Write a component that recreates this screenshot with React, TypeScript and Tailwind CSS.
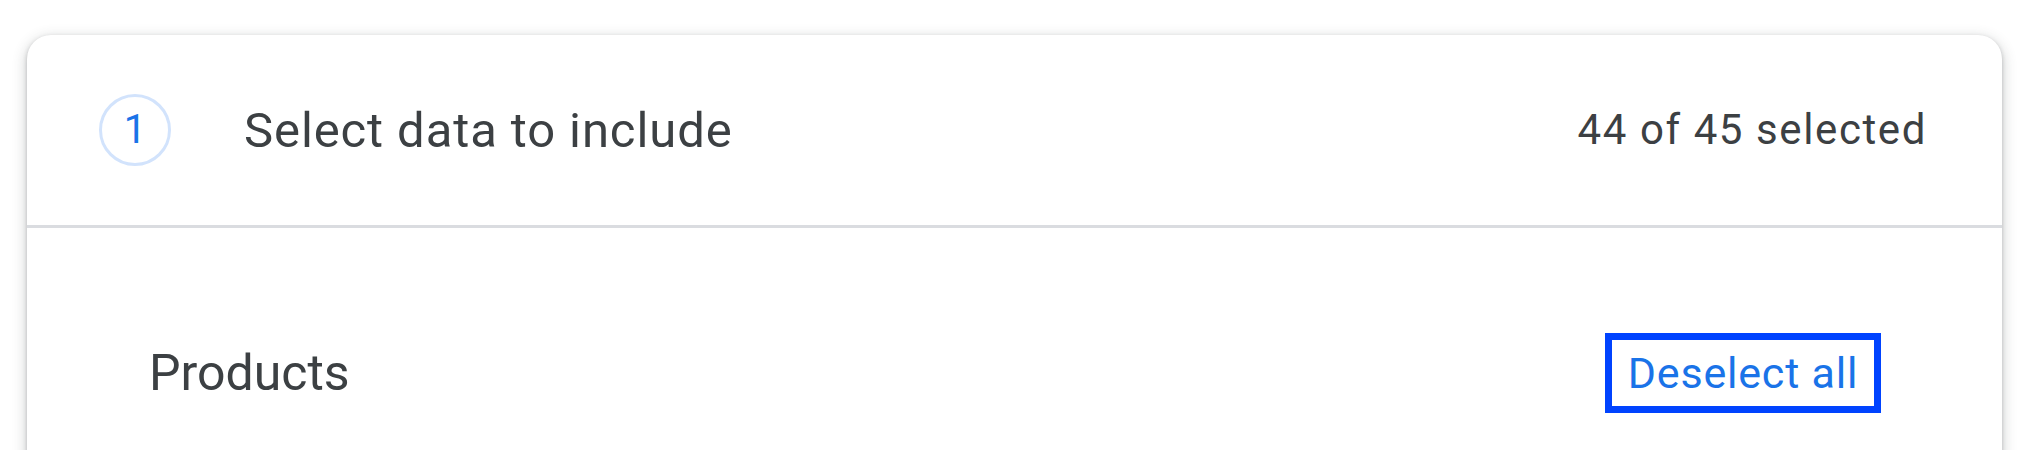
import React from "react";

const font = { fontFamily: "Roboto, 'Noto Sans', sans-serif" };

const App = () => {
  return (
    <div
      className="min-h-[450px] bg-white pt-[35px] pl-[27px] pr-[23px] overflow-hidden"
      style={font}
    >
      <div className="rounded-t-[24px] bg-white shadow-[0_2px_4px_0_rgba(60,64,67,0.3),0_4px_12px_4px_rgba(60,64,67,0.15)]">
        {/* Step header */}
        <div className="flex items-center h-[193px] pl-[72px] pr-[75px] border-b-[3px] border-[#dadce0]">
          <div className="w-[72px] h-[72px] rounded-full border-[3px] border-[#d2e3fc] flex items-center justify-center text-[40px] text-[#1a73e8] leading-none">
            1
          </div>
          <span className="ml-[73px] text-[49px] tracking-[0.9px] text-[#3c4043] leading-none">
            Select data to include
          </span>
          <span className="ml-auto text-[42px] tracking-[1.6px] text-[#3c4043] leading-none">
            44 of 45 selected
          </span>
        </div>

        {/* Products row */}
        <div className="flex items-center justify-between pl-[122px] pr-[121px] pt-[105px] pb-[60px]">
          <span className="text-[50px] text-[#3c4043] leading-none">
            Products
          </span>
          <button className="w-[276px] h-[80px] border-[7px] border-[#0043ff] flex items-center justify-center text-[43px] tracking-[0.8px] text-[#1a73e8] leading-none">
            Deselect all
          </button>
        </div>
      </div>
    </div>
  );
};

export default App;
